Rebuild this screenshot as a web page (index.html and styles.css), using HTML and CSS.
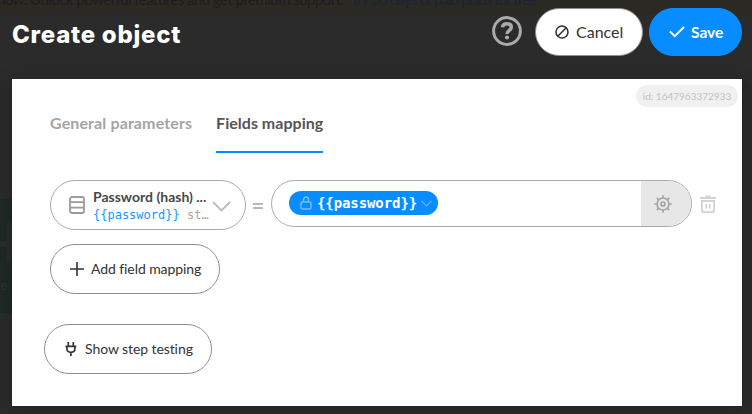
FILE: index.html
```html
<!DOCTYPE html>
<html lang="en">
<head>
<meta charset="utf-8">
<title>Create object</title>
<link rel="stylesheet" href="styles.css">
</head>
<body>
<div class="backdrop">
  <div class="notice"><span>low. Unlock powerful features and get premium support.</span><span class="notice-link">Try 30 days of paid plans for free</span></div>
  <div class="block"><svg width="12" height="42" viewBox="0 0 12 42"><path d="M0 22H9M9 3V39" fill="none" stroke="#2b2c2b" stroke-width="5" stroke-linecap="round"/></svg><span>te</span></div>
</div>
<main class="dialog">
  <header class="head">
    <h1>Create object</h1>
    <svg class="help" width="30" height="30" viewBox="0 0 30 30" fill="none" stroke="#aaa"><circle cx="15" cy="15" r="13.4" stroke-width="3"/><path d="M10.500 11.300c.3-2.300 2-3.500 4.400-3.500 2.600 0 4.400 1.300 4.400 3.500 0 3.100-4.300 3.200-4.300 6.700" stroke-width="3.500"/><circle cx="15" cy="21.500" r="2.100" fill="#aaa" stroke="none"/></svg>
    <button class="btn cancel"><svg width="14" height="14" viewBox="0 0 14 14" fill="none" stroke="#333" stroke-width="1.600"><circle cx="7" cy="7" r="6"/><path d="M3 11 11 3"/></svg><span>Cancel</span></button>
    <button class="btn save"><svg width="16" height="12" viewBox="0 0 16 12" fill="none" stroke="#fff" stroke-width="2"><path d="m1 5.500 4.800 4.700L15 1"/></svg>Save</button>
  </header>
  <section class="panel">
    <div class="id">id: 1647963372933</div>
    <nav class="tabs"><a>General parameters</a><a class="active">Fields mapping</a></nav>
    <div class="mapping">
      <div class="select">
        <svg width="16" height="18" viewBox="0 0 16 18" fill="none" stroke="#9b9b9b" stroke-width="1.800"><rect x="1" y="1" width="14" height="16" rx="2"/><path d="M1 6.200H15M1 11.600H15"/></svg>
        <div class="field"><strong>Password (hash) ...</strong><div class="code"><span>{{password}}</span> st…</div></div>
        <svg class="chev" width="19" height="11" viewBox="0 0 19 11" fill="none" stroke="#bbb" stroke-width="1.800"><path d="m1 1 8.500 8.500L18 1"/></svg>
      </div>
      <svg class="equals" width="10" height="6" viewBox="0 0 10 6"><path d="M0 1H10M0 5H10" stroke="#a3a3a3" stroke-width="1.600"/></svg>
      <div class="input">
        <div class="chip"><svg width="12" height="14" viewBox="0 0 12 14" fill="none" stroke="#75bcff" stroke-width="1.500"><rect x="1" y="6" width="10" height="7" rx="1.500"/><path d="M3.500 6V3.500a2.500 2.500 0 0 1 5 0V6"/></svg><span>{{password}}</span><svg width="11" height="7" viewBox="0 0 11 7" fill="none" stroke="#61b3ff" stroke-width="1.300"><path d="m.6 1 4.900 4.900L10.400 1"/></svg></div>
        <div class="settings"><svg width="18" height="18" viewBox="0 0 18 18" fill="none" stroke="#a6a6a6" stroke-width="1.700"><circle cx="9" cy="9" r="6"/><circle cx="9" cy="9" r="2"/><path d="M9 3V.3M9 15v2.700M3 9H.3M15 9h2.700M4.800 4.800l-2-2M13.200 4.800l2-2M4.800 13.200l-2 2M13.200 13.200l2 2"/></svg></div>
      </div>
      <svg class="trash" width="16" height="18" viewBox="0 0 16 18" fill="none" stroke="#d2d2d2" stroke-width="1.800"><path d="M0 3H16M5.500 1.500h5M1.900 6h12.200v9.500q0 1.600-1.600 1.600h-9q-1.600 0-1.600-1.600zM6.300 9v4.500M9.700 9v4.500"/></svg>
    </div>
    <button class="btn outline add"><svg width="14" height="14" viewBox="0 0 14 14"><path d="M7 0V14M0 7H14" stroke="#333" stroke-width="1.600"/></svg><span>Add field mapping</span></button>
    <button class="btn outline test"><svg width="12" height="15" viewBox="0 0 12 15" fill="none" stroke="#333" stroke-width="1.700"><path d="M3.300 0v4M8.300 0v4M.5 4.300h10.800M1.900 4.300v2.500c0 2.200 1.400 3.500 4 3.500s4-1.300 4-3.500V4.300M5.900 10.300V14"/></svg><span>Show step testing</span></button>
  </section>
</main>
</body>
</html>
```
FILE: styles.css
```css
* { box-sizing: border-box; }
body { margin: 0; width: 752px; height: 414px; overflow: hidden; background: #2b2b2b; font-family: Lato, sans-serif; color: #333; }
svg { display: block; flex: none; }
.backdrop { position: absolute; inset: 0; overflow: hidden; }
.notice { height: 15px; background: #2b2924; color: #1d1d1d; font-size: 15px; line-height: 18px; white-space: nowrap; display: flex; gap: 7px; padding-left: 2px; }
.notice span { margin-top: -10px; letter-spacing: -.53px; }
.notice .notice-link { color: #1b2432; letter-spacing: -.85px; }
.block { margin-top: 184px; width: 12px; height: 114px; background: #1e2926; color: #303331; overflow: hidden; padding-top: 23px; font: 13px Lato, sans-serif; }
.block span { display: block; margin: 13px 0 0 -4px; }
.dialog { position: relative; width: 730px; margin-left: 12px; }
.head { height: 79px; display: flex; align-items: flex-start; padding-top: 8px; }
h1 { margin: 13px auto 0 0; color: #fff; font: 800 24px/28px Inter, sans-serif; letter-spacing: .75px; white-space: nowrap; }
.help { margin: 8px 13px 0 0; }
.btn { display: flex; align-items: center; height: 48px; border: 1px solid #8f8f8f; border-radius: 24px; background: #fff; color: #333; font: 16px Lato, sans-serif; padding: 0; white-space: nowrap; }
.cancel { width: 108px; padding-left: 19px; gap: 7px; margin-right: 6px; }
.cancel span { margin-top: -2px; }
.save { width: 93px; padding-left: 19px; gap: 6px; color: #fff; font-weight: 700; font-size: 15.500px; background: #078dff; border-color: #078dff; }
.panel { height: 327px; padding: 6px 4px 0 38px; background: #fff; box-shadow: 0 2px 16px rgba(0,0,0,.25); }
.id { width: 102px; height: 22px; margin-left: auto; border-radius: 11px; background: #f0f0f0; color: #c2c2c2; font-size: 10px; line-height: 22px; text-align: center; white-space: nowrap; }
.tabs { display: flex; gap: 24px; height: 46px; font-size: 16px; font-weight: 700; line-height: 18px; letter-spacing: .12px; color: #a5a5a5; white-space: nowrap; }
.tabs a { padding-top: 7px; }
.tabs .active { color: #555; border-bottom: 2px solid #078dff; letter-spacing: .02px; }
.mapping { display: flex; margin-top: 27px; height: 50px; }
.select { width: 196px; height: 50px; border: 1px solid #aaa; border-radius: 25px; display: flex; align-items: center; padding-left: 18px; }
.field { width: 118px; margin-left: 8px; padding-top: 3px; font-size: 14px; line-height: 17px; white-space: nowrap; color: #484848; }
.field strong { display: block; }
.code { font: 12px/20px "DejaVu Sans Mono", monospace; color: #a6a6a6; }
.code span { color: #1695ff; }
.chev { margin: 3px 0 0 1px; }
.equals { margin: 23px 8px 0 7px; }
.input { width: 421px; height: 47px; border: 1px solid #aaa; border-radius: 24px; overflow: hidden; display: flex; align-items: center; justify-content: space-between; padding-left: 17px; }
.chip { width: 149px; height: 24px; border-radius: 12px; background: #078dff; display: flex; align-items: center; padding-left: 11px; color: #fff; font: 700 14px/20px "DejaVu Sans Mono", monospace; letter-spacing: -.09px; margin-top: -1px; }
.chip span { width: 104px; margin-left: 5px; }
.settings { width: 50px; height: 45px; background: #e7e7e7; padding: 14px 0 0 13px; }
.trash { margin: 15px 0 0 8px; }
.outline { height: 50px; border-radius: 25px; font-size: 14px; letter-spacing: -.08px; }
.outline span { margin-top: -2px; }
.add { width: 170px; margin-top: 14px; padding-left: 19px; gap: 7px; }
.test { width: 168px; margin: 30px 0 0 -6px; padding-left: 20px; gap: 8px; }
```
